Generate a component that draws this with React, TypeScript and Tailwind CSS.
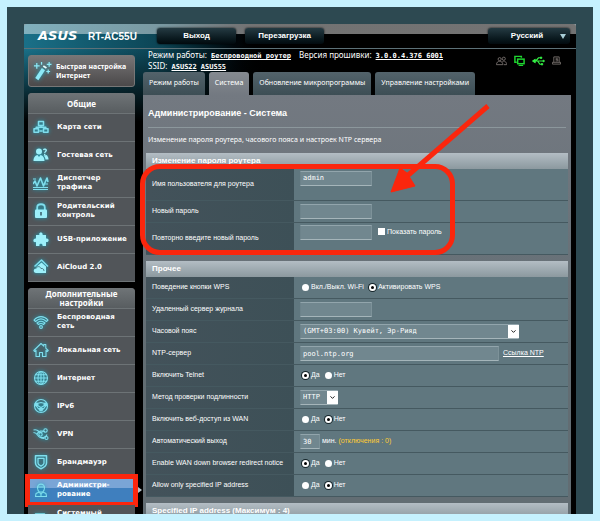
import type { ReactNode } from 'react';
import { ChevronDown } from 'lucide-react';

type Item = { label: string; icon: ReactNode; active?: boolean };

function Icon({ children, fill = false }: { children: ReactNode; fill?: boolean }) {
  return (
    <svg
      viewBox="0 0 16 16"
      className="size-4 shrink-0 drop-shadow-[0_0_2px_#18a5bd]"
      fill={fill ? '#9df0fa' : 'none'}
      stroke={fill ? 'none' : '#7fdeed'}
      strokeWidth="1.1"
      strokeLinejoin="round"
    >
      {children}
    </svg>
  );
}

const general: Item[] = [
  {
    label: 'Карта сети',
    icon: (
      <Icon>
        <path strokeWidth="1.5" d="M5.5 2.5h5v4h-5zM1 9.7h4.5v3.5H1zM10.5 9.7H15v3.5h-4.500zM8 6.5v2M3.200 9.700V8.200h9.600v1.500M6.500 12h3" />
      </Icon>
    ),
  },
  {
    label: 'Гостевая сеть',
    icon: (
      <Icon fill>
        <circle cx="6" cy="4.500" r="3" />
        <path d="M.5 14c0-4 2-5.500 4-6l1.500 2 1.500-2c2 .5 4 2 4 6zM10.500 8.500l3-.5c1.200 1 2 2.500 2 4.500h-3c-.2-1.800-.9-3-2-4z" />
        <path d="M10 3c0-2 4-2 4 .3 0 1.700-1.600 1.400-1.600 3h-1.300c0-2 1.400-2 1.400-3 0-.8-1.200-.8-1.200 0zM11 7h1.400v1.200H11z" />
      </Icon>
    ),
  },
  {
    label: 'Диспетчер\nтрафика',
    icon: (
      <Icon>
        <path strokeWidth="1.600" d="M0 9l2-3 2 5 3.500-8 3 8L14 3l1 4" />
        <path d="M0 12.500h15M0 14.500h15M12 9h3M0 4h3" />
      </Icon>
    ),
  },
  {
    label: 'Родительский\nконтроль',
    icon: (
      <Icon>
        <path strokeWidth="1.800" d="M4.200 7V4.500C4.200.2 11.800.2 11.800 4.500V7" />
        <rect x="2" y="6.500" width="12" height="8.500" rx="1" fill="#9df0fa" stroke="none" />
        <path stroke="#3b6570" strokeWidth="1.600" d="M8 9v3.500" />
      </Icon>
    ),
  },
  {
    label: 'USB-приложение',
    icon: (
      <Icon fill>
        <path d="M3 4h3.500C5 .5 10.500.5 9.500 4H13v3.500c3.500-1 3.500 4.500 0 3.500v4H9.500c.8-3-4-3-3 0H3v-4c-3.500 1-3.500-4 0-3.500z" />
      </Icon>
    ),
  },
  {
    label: 'AiCloud 2.0',
    icon: (
      <Icon>
        <path strokeWidth="1.600" d="M1.500 7.500L8.500 1l6.500 6.500" />
        <path fill="#9df0fa" stroke="none" d="M5 6.500l3.500-3L13 7.500V14H3c-3 0-3-4.500 0-4.500C3 7.500 4.500 7 5 6.500z" />
        <path stroke="#3b6570" strokeWidth=".8" d="M3 9.500c1-2.500 4-2.500 5 0 2-.5 3 1 3 2.500" />
      </Icon>
    ),
  },
];

const advanced: Item[] = [
  {
    label: 'Беспроводная\nсеть',
    icon: (
      <Icon>
        <path d="M1 6c4-4.500 10-4.500 14 0l-1.500 1.500c-3.500-3.300-7.500-3.300-11 0zM4 9c2.500-2.200 5.500-2.200 8 0l-1.500 1.500c-1.500-1.200-3.500-1.200-5 0z" />
        <circle cx="8" cy="13" r="1.400" />
      </Icon>
    ),
  },
  {
    label: 'Локальная сеть',
    icon: (
      <Icon>
        <path d="M.8 8.500L8 1.500l2.800 2.700V2.500h2v3.700l2.400 2.300-1 1-1.200-1.100v6.100H9.500v-4h-3v4H3V8.400L1.800 9.500z" />
      </Icon>
    ),
  },
  {
    label: 'Интернет',
    icon: (
      <Icon>
        <circle cx="8" cy="8" r="6.500" />
        <ellipse cx="8" cy="8" rx="3" ry="6.500" />
        <path d="M1.500 8h13M8 1.500v13M2.500 4.800h11M2.500 11.200h11" />
      </Icon>
    ),
  },
  {
    label: 'IPv6',
    icon: (
      <Icon>
        <circle cx="8" cy="8" r="6.500" />
        <path d="M2 6l6-1.500L14 6l-3.500 5h-5zM2 6l8.500 5M14 6l-8.500 5" />
        <circle cx="3.500" cy="6.500" r="1.500" fill="#7fdeed" />
        <circle cx="12.500" cy="6.500" r="1.500" fill="#7fdeed" />
        <circle cx="8" cy="11.500" r="1.500" fill="#7fdeed" />
      </Icon>
    ),
  },
  {
    label: 'VPN',
    icon: (
      <Icon>
        <path d="M.5 4c3-1 4 0 5.500 1.500S9 7 10.500 4.500M.5 6.500c2 0 3 1 4 2.500s4 4 7 3.500M4 8c1.500-3 5-4 8-2M7 11.500c3 .5 6-.5 7-3" />
        <circle cx="12.500" cy="4.500" r="1.700" />
        <circle cx="13.500" cy="12" r="1.500" />
        <circle cx="7.500" cy="8.500" r="1.700" />
      </Icon>
    ),
  },
  {
    label: 'Брандмауэр',
    icon: (
      <Icon>
        <path strokeWidth="1.500" d="M2.500 1.800h11V9c0 3-3 4.700-5.500 5.800C5.500 13.700 2.500 12 2.500 9z" />
        <path strokeWidth="1.300" d="M5 4.300h6v5c0 1.200-1.500 2-3 2.800-1.500-.8-3-1.600-3-2.800z" />
      </Icon>
    ),
  },
  {
    label: 'Администри-\nрование',
    active: true,
    icon: (
      <Icon>
        <path d="M4.500 6C4 .8 12 .8 11.500 6c-.2 2-1 3.500-1.800 4H6.300C5.500 9.500 4.700 8 4.500 6zM4.800 5h6.400M6.300 10L3 11.500 2.500 14.500h11L13 11.500 9.700 10M6.300 10L8 12.500 9.700 10M8 12.500v2" />
      </Icon>
    ),
  },
  {
    label: 'Системный\n\u00a0',
    icon: (
      <Icon>
        <path strokeWidth="1.400" d="M2.500 4h9v10h-9zM4.500 7h5M4.500 10h5M11.500 6h2.500v8" />
      </Icon>
    ),
  },
];

const tabs = ['Режим работы', 'Система', 'Обновление микропрограммы', 'Управление настройками'];

function MenuItem({ item }: { item: Item }) {
  return (
    <li className="relative">
      <a
        href="#"
        className={
          'flex h-7 items-center gap-2 border-b pb-px pl-[5px] font-["DejaVu_Sans",sans-serif] text-[7px] leading-[9px] font-bold whitespace-pre ' +
          (item.active
            ? 'border-[#3478b5] bg-linear-to-b from-[#7aa5d6] from-40% to-[#3f7fbe] to-40%'
            : 'border-[#6d7376] bg-[#515559]')
        }
      >
        {item.icon}
        {item.label}
      </a>
      {item.active && (
        <>
          <span className="absolute -inset-x-[3px] -top-[3px] -bottom-[2px] border-[5px] border-[#fb260d]" />
          <span className="absolute top-[10px] -right-[7px] border-y-3 border-l-4 border-y-transparent border-l-[#b9c5cc]" />
        </>
      )}
    </li>
  );
}

function Menu({ title, items }: { title: string; items: Item[] }) {
  return (
    <nav className="rounded-t bg-[#515559]">
      <h2 className="flex h-5 items-center justify-center rounded-t bg-linear-to-b from-[#6f7477] to-[#585d60] text-center text-[8px] leading-[9px] font-bold whitespace-pre">
        {title}
      </h2>
      <ul className="border-t border-[#6d7376]">
        {items.map((item) => (
          <MenuItem key={item.label} item={item} />
        ))}
      </ul>
    </nav>
  );
}

function Row({ label, id, tall, children }: { label: string; id?: string; tall?: boolean; children: ReactNode }) {
  return (
    <div className={'flex border-b border-[#455960] ' + (tall ? 'h-8' : 'h-[22px]')}>
      <label
        htmlFor={id}
        className="flex w-[148px] shrink-0 items-center bg-linear-to-r from-[#43525a] to-[#3d5057] pl-1.5 whitespace-nowrap"
      >
        {label}
      </label>
      <div className="flex flex-1 items-center bg-[#60777f] pl-1.5">{children}</div>
    </div>
  );
}

function SectionTitle({ children }: { children: ReactNode }) {
  return (
    <h2 className="flex h-4 items-center bg-linear-to-b from-[#b3bdc4] to-[#8c999f] pl-1.5 text-[8px] font-bold">{children}</h2>
  );
}

const field =
  'h-[15px] border border-t-[#92a5ac] border-r-[#7d9299] border-b-[#a5b5ba] border-l-[#6d838b] bg-[#71878f] px-0.5 font-["DejaVu_Sans_Mono",monospace] text-[7px] text-white';

function TextField({ id, value, type = 'text', width = 'w-[72px]' }: { id: string; value?: string; type?: string; width?: string }) {
  return <input id={id} type={type} defaultValue={value} className={field + ' ' + width} />;
}

function Dropdown({ id, value, width }: { id: string; value: string; width: string }) {
  return (
    <span className={'relative ' + width}>
      <select id={id} className={field + ' block w-full appearance-none'}>
        <option>{value}</option>
      </select>
      <span className="pointer-events-none absolute inset-y-px right-0 flex w-[11px] items-center justify-center bg-white">
        <ChevronDown className="size-[7px] text-black" strokeWidth={3} />
      </span>
    </span>
  );
}

function Choice({ name, options, picked }: { name: string; options: string[]; picked: number }) {
  return (
    <div className="flex gap-[5px] pl-0.5">
      {options.map((option, i) => (
        <label key={option} className="flex items-center gap-0.5">
          <input
            type="radio"
            name={name}
            defaultChecked={i === picked}
            className="size-[7px] appearance-none rounded-full bg-white checked:border-2 checked:border-white checked:bg-black checked:ring-1 checked:ring-[#16262b]"
          />
          {option}
        </label>
      ))}
    </div>
  );
}

const headerButton =
  'flex h-4 items-center justify-center rounded-[3px] bg-linear-to-b from-[#253b43] to-[#020a0e] text-[8px] font-bold shadow-[0_0_2px_#000]';

function Header() {
  return (
    <header className="flex h-[25px] items-center border-b border-[#5d7178] bg-linear-to-b from-white/45 from-40% to-transparent to-40% pr-1.5 pl-[14px]">
      <span className='w-[50px] font-["DejaVu_Sans",sans-serif] text-[13px] font-bold italic'>ASUS</span>
      <span className="w-[69px] text-[10px] font-bold">RT-AC55U</span>
      <button className={headerButton + ' w-[79px]'}>Выход</button>
      <button className={headerButton + ' ml-[9px] w-[79px]'}>Перезагрузка</button>
      <span className="relative ml-auto w-[82px]">
        <select aria-label="Язык" className={headerButton + ' w-full appearance-none pr-1 text-center'}>
          <option>Русский</option>
        </select>
        <span className="pointer-events-none absolute top-[6px] right-1 border-x-3 border-t-5 border-x-transparent border-t-[#a9cfd8]" />
      </span>
    </header>
  );
}

function StatusIcons() {
  return (
    <div className="mr-2.5 ml-auto flex items-center gap-[7px]">
      <svg viewBox="0 0 12 10" className="h-[10px] w-[11px]" fill="none" stroke="#77706d" strokeWidth="1">
        <circle cx="4" cy="3" r="1.700" />
        <circle cx="8.500" cy="2.500" r="1.700" />
        <path d="M.5 9c0-5 7-5 7 0zM7 5.500c2-1 4.500 0 4.500 3.500h-3" />
      </svg>
      <svg viewBox="0 0 12 12" className="size-[11px]" fill="none" stroke="#1fd530" strokeWidth="1.600">
        <path d="M3 8H1V1.500h7V3" />
        <rect x="4" y="4.500" width="7" height="5" />
        <path d="M5 11.500h5" />
      </svg>
      <svg viewBox="0 0 14 10" className="h-[10px] w-[13px]" fill="#35f145" stroke="#35f145" strokeWidth="1">
        <path fill="none" strokeWidth="1.300" d="M1 5h12M4 5l3-3.500h2.500M6 5l2.500 3.500h2" />
        <path d="M3.500 3L.5 5l3 2zM9 .8h1.500v1.400H9zM10 7.800h1.500v1.400H10z" />
        <circle cx="12.500" cy="5" r=".8" />
      </svg>
      <svg viewBox="0 0 10 10" className="size-[9px]" fill="none" stroke="#77706d" strokeWidth="1">
        <path d="M2 7V1h6v6M.5 7h9v2h-9zM4 2.500h2.500M4 4h2.500v1.500H4" />
      </svg>
    </div>
  );
}

function Arrow() {
  return (
    <svg viewBox="0 0 100 92" className="pointer-events-none absolute -top-[51px] left-[244px] h-[92px] w-[100px]">
      <path d="M98 4L16 75" stroke="#fb260d" strokeWidth="5" />
      <path d="M1 90L10 66l7 5 8 13z" fill="#fb260d" stroke="#fb260d" />
    </svg>
  );
}

function Settings() {
  return (
    <section className="flex-1 bg-linear-to-b from-[#737981] to-[#626d73] to-60% px-[3px] text-[7px]">
      <h1 className="mx-0.5 flex h-[33px] items-end border-b border-[#8c979c] pb-[7px] text-[9px] font-bold">
        Администрирование - Система
      </h1>
      <p className='flex h-[25px] items-center pl-0.5 font-["Noto_Sans",sans-serif]'>
        Изменение пароля роутера, часового пояса и настроек NTP сервера
      </p>

      <div className="relative">
        <SectionTitle>Изменение пароля роутера</SectionTitle>
        <Row label="Имя пользователя для роутера" id="login" tall>
          <div className="h-7">
            <TextField id="login" value="admin" />
          </div>
        </Row>
        <Row label="Новый пароль" id="password">
          <TextField id="password" type="password" />
        </Row>
        <Row label="Повторно введите новый пароль" id="repeat" tall>
          <div className="flex h-7 items-start">
            <TextField id="repeat" type="password" />
            <label className="mt-0.5 ml-1.5 flex items-center gap-0.5">
              <input type="checkbox" className="size-[7px] appearance-none bg-white" />
              Показать пароль
            </label>
          </div>
        </Row>
        <div className="pointer-events-none absolute top-[11px] -left-[6px] h-[91px] w-[315px] rounded-[20px] border-[5px] border-[#fb260d]" />
        <Arrow />
      </div>

      <div className="mt-1.5">
        <SectionTitle>Прочее</SectionTitle>
        <Row label="Поведение кнопки WPS">
          <Choice name="wps" options={['Вкл./Выкл. Wi-Fi', 'Активировать WPS']} picked={1} />
        </Row>
        <Row label="Удаленный сервер журнала" id="log">
          <TextField id="log" />
        </Row>
        <Row label="Часовой пояс" id="tz">
          <Dropdown id="tz" value="(GMT+03:00) Кувейт, Эр-Рияд" width="w-[219px]" />
        </Row>
        <Row label="NTP-сервер" id="ntp">
          <TextField id="ntp" value="pool.ntp.org" width="w-[199px]" />
          <a href="#" className="ml-1 underline">Ссылка NTP</a>
        </Row>
        <Row label="Включить Telnet">
          <Choice name="telnet" options={['Да', 'Нет']} picked={0} />
        </Row>
        <Row label="Метод проверки подлинности" id="auth">
          <Dropdown id="auth" value="HTTP" width="w-[38px]" />
        </Row>
        <Row label="Включить веб-доступ из WAN">
          <Choice name="wan" options={['Да', 'Нет']} picked={1} />
        </Row>
        <Row label="Автоматический выход" id="logout">
          <TextField id="logout" value="30" width="w-5" />
          <span className="ml-0.5">
            мин. <span className="text-[#ffcc33]">(отключения : 0)</span>
          </span>
        </Row>
        <Row label="Enable WAN down browser redirect notice">
          <Choice name="redirect" options={['Да', 'Нет']} picked={0} />
        </Row>
        <Row label="Allow only specified IP address">
          <Choice name="allow" options={['Да', 'Нет']} picked={1} />
        </Row>
      </div>

      <div className="mt-1.5">
        <SectionTitle>Specified IP address (Максимум : 4)</SectionTitle>
      </div>
    </section>
  );
}

const infoLink = 'font-["DejaVu_Sans_Mono",monospace] text-[7px] font-bold underline';

export default function App() {
  return (
    <div className='h-screen bg-[#c5f1fe] p-[7px] font-["Liberation_Sans",sans-serif] text-white'>
      <div className="h-full overflow-hidden bg-[#2d4951] px-[17px] pt-[17px]">
        <div className="rounded-t-[3px] bg-black bg-linear-to-r from-[#1a7088] via-[#0c4454] via-25% to-black to-45%">
          <Header />
          <div className="flex bg-linear-to-b from-transparent to-black to-15% pl-1">
            <aside className='flex w-[107px] shrink-0 flex-col gap-1.5 pt-1.5 font-["Noto_Sans",sans-serif]'>
              <a
                href="#"
                className="flex h-8 items-center gap-1 rounded-[3px] border border-[#777] bg-linear-to-b from-[#777576] to-[#4b494a] pl-1 text-[7px] leading-[9px] font-bold whitespace-pre"
              >
                <svg viewBox="0 0 20 20" className="size-[19px] shrink-0 drop-shadow-[0_0_2px_#18a5bd]" fill="none" stroke="#8eeaf7">
                  <path strokeWidth="4" d="M4 18L11 7.500" />
                  <path stroke="#eaffff" strokeWidth="4" d="M12 6l1-1.500" />
                  <path strokeWidth="1.300" d="M4 1v6M1 4h6M17 0v5M14.500 2.500h5M16 8v4M14 10h4M9 0v3" />
                </svg>
                {'Быстрая настройка\nИнтернет'}
              </a>
              <Menu title="Общие" items={general} />
              <Menu title={'Дополнительные\nнастройки'} items={advanced} />
            </aside>

            <main className="ml-2 flex min-w-0 flex-1 flex-col pr-[5px]">
              <div className="flex h-[23px] pl-[5px]">
                <div className='font-["Noto_Sans",sans-serif] text-[8px] leading-[11px]'>
                  <p className="flex h-[11px] items-baseline gap-1 whitespace-nowrap">
                    Режим работы: <a href="#" className={infoLink}>Беспроводной роутер</a>
                    <span className="ml-1">Версия прошивки:</span>
                    <a href="#" className={infoLink}>3.0.0.4.376_6001</a>
                  </p>
                  <p className="flex h-[11px] items-baseline gap-1">
                    SSID: <a href="#" className={infoLink}>ASUS22</a>
                    <a href="#" className={infoLink}>ASUS55</a>
                  </p>
                </div>
                <StatusIcons />
              </div>
              <div className='flex h-[23px] gap-1 font-["Noto_Sans",sans-serif] text-[7px]'>
                {tabs.map((tab) => (
                  <button
                    key={tab}
                    className={
                      'rounded-t-[3px] px-1.5 whitespace-nowrap ' +
                      (tab === 'Система' ? 'bg-linear-to-b from-[#858a90] to-[#737981]' : 'bg-linear-to-b from-[#53636b] to-[#3d4e55]')
                    }
                  >
                    {tab}
                  </button>
                ))}
              </div>
              <Settings />
            </main>
          </div>
        </div>
      </div>
    </div>
  );
}
